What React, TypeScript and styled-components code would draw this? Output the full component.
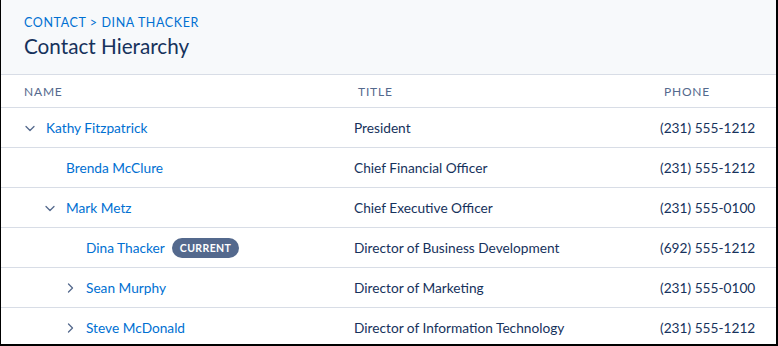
import styled, { createGlobalStyle } from "styled-components";

const GlobalStyle = createGlobalStyle`
  html, body {
    margin: 0;
    padding: 0;
    background: #ffffff;
  }
  body {
    font-family: Lato, "Noto Sans", sans-serif;
    color: #16325c;
  }
`;

const Frame = styled.div`
  width: 778px;
  height: 346px;
  box-sizing: border-box;
  border-left: 1px solid #000;
  border-right: 2px solid #000;
  border-bottom: 2px solid #000;
  overflow: hidden;
  background: #fff;
`;

const Header = styled.header`
  background: #f7f9fb;
  border-bottom: 1px solid #d8dde6;
  padding: 14px 23px 0;
  height: 75px;
  box-sizing: border-box;
`;

const Breadcrumb = styled.div`
  font-size: 12.5px;
  letter-spacing: 0.6px;
  color: #0070d2;
  text-transform: uppercase;
  line-height: 18px;
`;

const Title = styled.h1`
  margin: 1px 0 0;
  font-size: 20.7px;
  font-weight: 400;
  color: #16325c;
  line-height: 26px;
`;

const Table = styled.table`
  width: 100%;
  border-collapse: collapse;
  font-size: 13.7px;
`;

const HeadCell = styled.th<{ $pad: number }>`
  text-align: left;
  font-weight: 400;
  font-size: 12px;
  letter-spacing: 0.8px;
  color: #54698d;
  text-transform: uppercase;
  height: 32px;
  padding: 0 0 0 ${(p) => p.$pad}px;
  border-bottom: 1px solid #d8dde6;
`;

const Cell = styled.td<{ $pad: number }>`
  height: 39px;
  padding: 0 0 0 ${(p) => p.$pad}px;
  border-bottom: 1px solid #d8dde6;
  color: #16325c;
  white-space: nowrap;
`;

const NameWrap = styled.div<{ $level: number }>`
  display: flex;
  align-items: center;
  padding-left: ${(p) => 23 + (p.$level - 1) * 20}px;
`;

const Toggle = styled.span`
  width: 22px;
  display: inline-flex;
  align-items: center;
  color: #54698d;
`;

const NameLink = styled.a`
  color: #0070d2;
  text-decoration: none;
`;

const Badge = styled.span`
  margin-left: 7px;
  background: #54698d;
  color: #fff;
  font-size: 10.5px;
  font-weight: 700;
  letter-spacing: 0.4px;
  line-height: 20px;
  padding: 0 8px;
  border-radius: 10px;
`;

type Row = {
  name: string;
  title: string;
  phone: string;
  level: number;
  toggle?: "open" | "closed";
  current?: boolean;
};

const rows: Row[] = [
  { name: "Kathy Fitzpatrick", title: "President", phone: "(231) 555-1212", level: 1, toggle: "open" },
  { name: "Brenda McClure", title: "Chief Financial Officer", phone: "(231) 555-1212", level: 2 },
  { name: "Mark Metz", title: "Chief Executive Officer", phone: "(231) 555-0100", level: 2, toggle: "open" },
  { name: "Dina Thacker", title: "Director of Business Development", phone: "(692) 555-1212", level: 3, current: true },
  { name: "Sean Murphy", title: "Director of Marketing", phone: "(231) 555-0100", level: 3, toggle: "closed" },
  { name: "Steve McDonald", title: "Director of Information Technology", phone: "(231) 555-1212", level: 3, toggle: "closed" },
];

const Chevron = ({ open }: { open: boolean }) => (
  <svg width="12" height="12" viewBox="0 0 12 12" fill="none">
    {open ? (
      <path d="M2 4.5 L6 8.5 L10 4.5" stroke="currentColor" strokeWidth="1.3" strokeLinecap="round" strokeLinejoin="round" />
    ) : (
      <path d="M4.5 2 L8.5 6 L4.5 10" stroke="currentColor" strokeWidth="1.3" strokeLinecap="round" strokeLinejoin="round" />
    )}
  </svg>
);

export default function App() {
  return (
    <>
      <GlobalStyle />
      <Frame>
        <Header>
          <Breadcrumb>Contact &gt; Dina Thacker</Breadcrumb>
          <Title>Contact Hierarchy</Title>
        </Header>
        <Table>
          <colgroup>
            <col style={{ width: 353 }} />
            <col style={{ width: 306 }} />
            <col />
          </colgroup>
          <thead>
            <tr>
              <HeadCell $pad={23}>Name</HeadCell>
              <HeadCell $pad={4}>Title</HeadCell>
              <HeadCell $pad={4}>Phone</HeadCell>
            </tr>
          </thead>
          <tbody>
            {rows.map((r) => (
              <tr key={r.name}>
                <Cell $pad={0}>
                  <NameWrap $level={r.level}>
                    <Toggle>{r.toggle && <Chevron open={r.toggle === "open"} />}</Toggle>
                    <NameLink href="#">{r.name}</NameLink>
                    {r.current && <Badge>CURRENT</Badge>}
                  </NameWrap>
                </Cell>
                <Cell $pad={0}>{r.title}</Cell>
                <Cell $pad={0}>{r.phone}</Cell>
              </tr>
            ))}
          </tbody>
        </Table>
      </Frame>
    </>
  );
}
